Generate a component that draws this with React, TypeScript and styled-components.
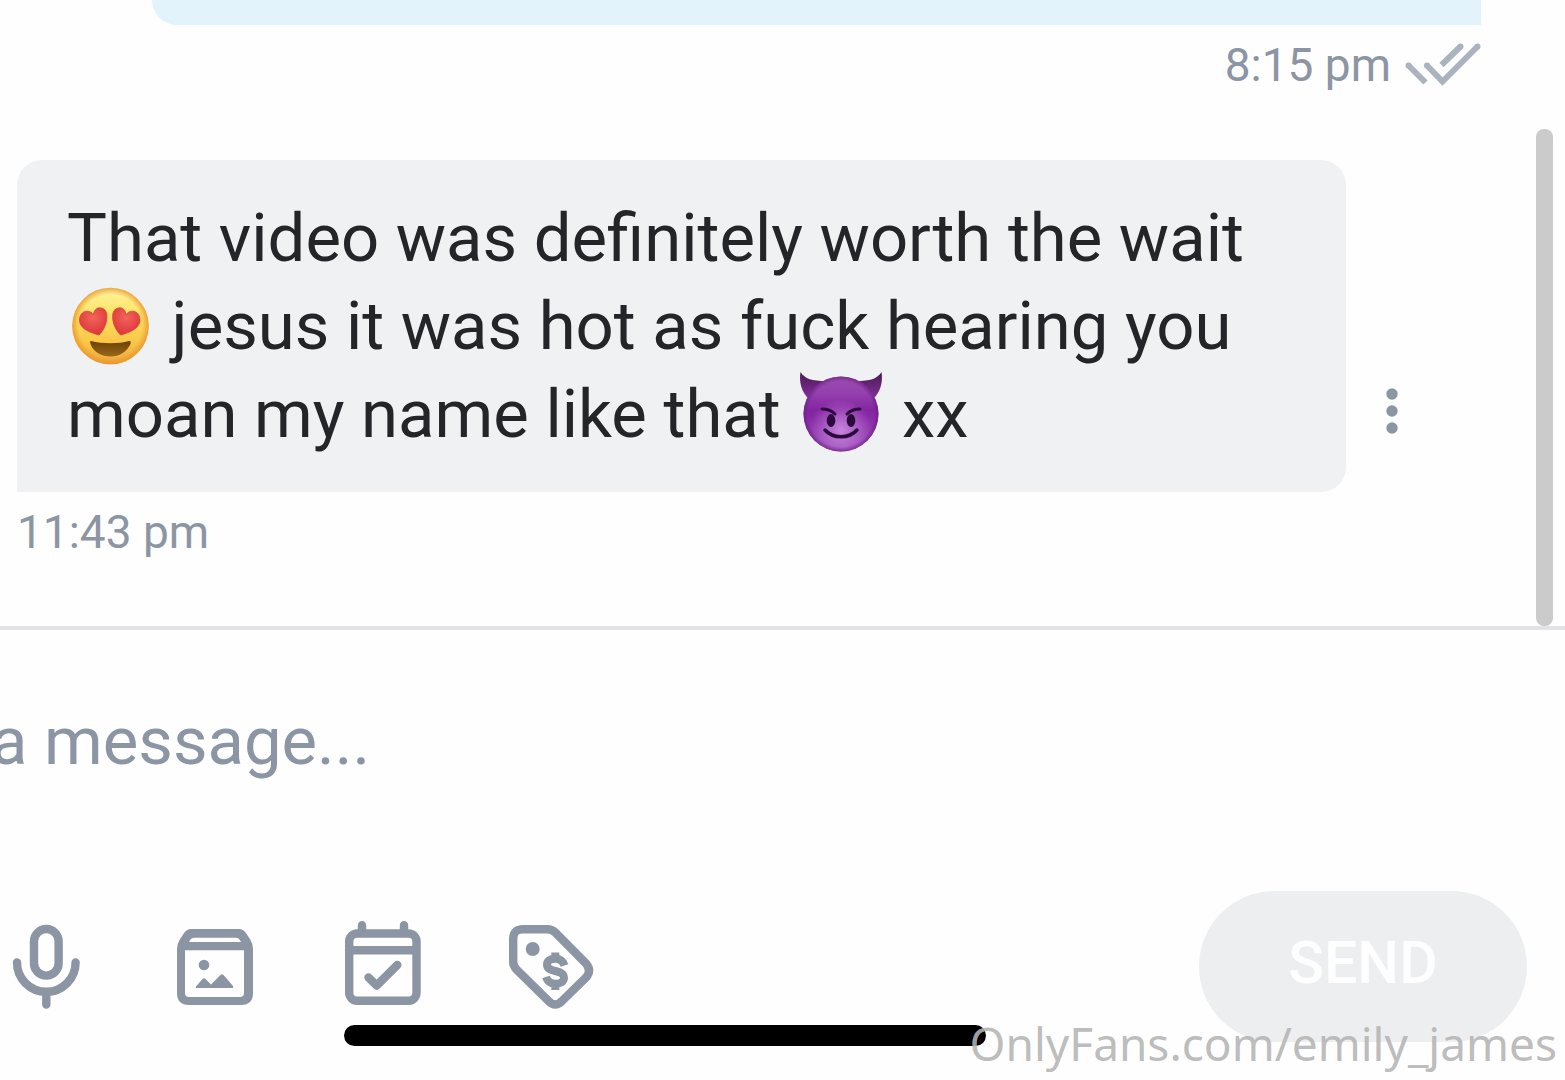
import React from 'react';
import styled, { createGlobalStyle } from 'styled-components';

const slate = '#8c95a4';

const GlobalStyle = createGlobalStyle`
  *, *::before, *::after { box-sizing: border-box; }
  body {
    margin: 0;
    background: #fefefe;
    color: #242529;
    font-family: Roboto, "Noto Sans", sans-serif;
    overflow: hidden;
  }
  button, input { font: inherit; }
`;

const Screen = styled.main`
  position: relative;
  display: flex;
  flex-direction: column;
  min-height: 100vh;
  overflow: hidden;
`;

const Pane = styled.section`
  display: flex;
  border-bottom: 4px solid #e1e3e9;
`;

const Thread = styled.div`
  flex: 1;
  display: flex;
  flex-direction: column;
  gap: 55px;
  padding: 0 55px 54px 17px;
`;

const Gutter = styled.div`
  display: flex;
  flex-direction: column;
  justify-content: flex-end;
  width: 29px;
  padding-right: 12px;
`;

const Thumb = styled.div`
  height: 497px;
  border-radius: 8px;
  background: #cbcbcb;
`;

const Message = styled.article`
  display: flex;
  flex-direction: column;
`;

const SentBubble = styled.div`
  height: 25px;
  margin-left: 135px;
  border-radius: 0 0 0 25px;
  background: #e2f3fc;
`;

const BubbleRow = styled.div`
  display: flex;
  align-items: flex-end;
  padding-right: 43px;
`;

const Bubble = styled.p`
  flex: 1;
  margin: 0;
  padding: 34px 50px;
  border-radius: 25px 25px 25px 0;
  background: #f0f1f3;
  font-size: 67px;
  line-height: 88px;
`;

const Meta = styled.div<{ $end?: boolean }>`
  display: flex;
  align-items: center;
  justify-content: ${(p) => (p.$end ? 'flex-end' : 'flex-start')};
  gap: 14px;
  color: ${slate};
  font-size: 46px;
  line-height: 80px;
`;

const PlainButton = styled.button`
  display: flex;
  align-items: center;
  justify-content: center;
  padding: 0;
  border: 0;
  background: none;
  color: ${slate};
  cursor: pointer;
`;

const MoreButton = styled(PlainButton)`
  width: 92px;
  height: 162px;
`;

const Composer = styled.form`
  flex: 1;
  display: flex;
  flex-direction: column;
  gap: 106px;
  padding: 67px 38px 38px 0;
`;

const MessageInput = styled.input`
  height: 88px;
  margin-left: -9px;
  padding: 0;
  border: 0;
  outline: 0;
  background: none;
  font-size: 67px;
  line-height: 88px;
  &::placeholder { color: ${slate}; opacity: 1; }
`;

const Toolbar = styled.div`
  display: flex;
  align-items: center;
  gap: 68px;
  margin-left: -4px;
`;

const SendButton = styled.button`
  width: 328px;
  height: 151px;
  margin-left: auto;
  padding: 0 0 8px;
  border: 0;
  border-radius: 76px;
  background: #edeef0;
  color: #fefefe;
  font-size: 59px;
  font-weight: 500;
`;

const HomeIndicator = styled.div`
  position: absolute;
  left: 22%;
  right: 37%;
  bottom: 34px;
  height: 21px;
  border-radius: 11px;
  background: #000;
`;

const Watermark = styled.div`
  position: absolute;
  right: 8px;
  bottom: 5px;
  color: rgba(180, 180, 180, 0.9);
  font-family: "Noto Sans", "Open Sans", sans-serif;
  font-size: 46px;
  line-height: 64px;
`;

const EmojiSvg = styled.svg`
  width: 84px;
  height: 84px;
  margin: 0 2px;
  vertical-align: -19px;
`;

function HeartEyes() {
  return (
    <EmojiSvg viewBox="0 0 84 84" role="img" aria-label="heart eyes">
      <defs>
        <linearGradient id="face" x1="0" y1="0" x2="0" y2="1">
          <stop offset="0" stopColor="#fff6a0" />
          <stop offset="0.35" stopColor="#fde264" />
          <stop offset="0.7" stopColor="#f9c748" />
          <stop offset="1" stopColor="#f0a93c" />
        </linearGradient>
        <radialGradient id="faceRim">
          <stop offset="0.82" stopColor="#e8932c" stopOpacity="0" />
          <stop offset="1" stopColor="#e8922c" stopOpacity="0.8" />
        </radialGradient>
        <radialGradient id="heart" cx="0.5" cy="0.35" r="0.65">
          <stop offset="0" stopColor="#f2645c" />
          <stop offset="1" stopColor="#de3538" />
        </radialGradient>
        <linearGradient id="mouth" x1="0" y1="0" x2="0" y2="1">
          <stop offset="0" stopColor="#6b4205" />
          <stop offset="1" stopColor="#98681a" />
        </linearGradient>
      </defs>
      <circle cx="41.500" cy="42" r="38.300" fill="url(#face)" />
      <circle cx="41.500" cy="42" r="38.300" fill="url(#faceRim)" />
      <path
        d="M30 51C22 49 11 45 10.500 37C10 30 15 26 20 27.500C22.500 28 24 29.500 24.500 31C24.500 26.500 28 23 32 24C38 25 38.500 31 37.500 37C36.500 43 33 48 30 51Z"
        fill="url(#heart)" stroke="#d84635" strokeWidth="0.8"
      />
      <path
        d="M51.500 51C59.500 49 70 45 71 37C71.500 30 66.500 26 61.500 27.500C59 28 57.500 29.500 57 31C57 26.500 53.500 23 49.500 24C43.500 25 43 31 44 37C45 43 48.500 48 51.500 51Z"
        fill="url(#heart)" stroke="#d84635" strokeWidth="0.8"
      />
      <path d="M22 57C33 60 50 60 60 57C62 57 62 58 61.500 60C58 68 50 72.500 41.500 72.500C33 72.500 24 68 21.500 60C21 58 21 57 22 57Z" fill="url(#mouth)" />
    </EmojiSvg>
  );
}

function Devil() {
  return (
    <EmojiSvg viewBox="0 0 84 84" role="img" aria-label="smiling face with horns">
      <defs>
        <linearGradient id="horn" x1="0" y1="0" x2="0" y2="1">
          <stop offset="0" stopColor="#4a1a55" />
          <stop offset="1" stopColor="#84319a" />
        </linearGradient>
        <linearGradient id="purple" x1="0" y1="0" x2="0" y2="1">
          <stop offset="0" stopColor="#9a4bae" />
          <stop offset="0.22" stopColor="#9440ae" />
          <stop offset="0.45" stopColor="#8424a2" />
          <stop offset="1" stopColor="#9a4bb8" />
        </linearGradient>
        <radialGradient id="purpleGlow" cx="0.5" cy="0.72" r="0.42">
          <stop offset="0" stopColor="#c684dc" />
          <stop offset="1" stopColor="#c684dc" stopOpacity="0" />
        </radialGradient>
        <radialGradient id="purpleRim">
          <stop offset="0.87" stopColor="#6f218a" stopOpacity="0" />
          <stop offset="1" stopColor="#65207e" stopOpacity="0.7" />
        </radialGradient>
      </defs>
      <path d="M1.500 0C6 7 13 9 27 9L10 27C2 20 0 9 1.500 0Z" fill="url(#horn)" />
      <path d="M82.500 0C78 7 71 9 57 9L74 27C82 20 84 9 82.500 0Z" fill="url(#horn)" />
      <circle cx="42" cy="42" r="37.500" fill="url(#purple)" />
      <circle cx="42" cy="42" r="37.500" fill="url(#purpleGlow)" />
      <circle cx="42" cy="42" r="37.500" fill="url(#purpleRim)" />
      <g fill="none" stroke="#2b0a3c" strokeWidth="3" strokeLinecap="round">
        <path d="M23 37C28 37 33 39 36 42" />
        <path d="M61 37C56 37 51 39 48 42" />
        <path d="M26 58C34 67 50 67 58 58" strokeWidth="3.500" />
      </g>
      <ellipse cx="32" cy="48.500" rx="4.300" ry="6.500" fill="#2b0a3c" />
      <ellipse cx="52" cy="48.500" rx="4.300" ry="6.500" fill="#2b0a3c" />
    </EmojiSvg>
  );
}

function ReadTicks() {
  return (
    <svg width="76" height="48" viewBox="0 0 76 48" fill="none" stroke="#aab3be" strokeWidth="6" aria-label="Read" role="img">
      <path d="M3 24L20.500 41.500M36.500 24L55.500 5.500" />
      <path d="M21.500 24L37.500 40.500L73 5" />
      <g fill="#aab3be" stroke="none">
        <circle cx="3.500" cy="24.500" r="3" />
        <circle cx="22" cy="24.500" r="3" />
        <circle cx="55.500" cy="5.500" r="3" />
        <circle cx="72.500" cy="5.500" r="3" />
      </g>
    </svg>
  );
}

function Glyph({ children }: { children: React.ReactNode }) {
  return (
    <svg
      width="100" height="100" viewBox="0 0 100 100" fill="none"
      stroke="currentColor" strokeWidth="8.400" strokeLinecap="round" strokeLinejoin="round" aria-hidden="true"
    >
      {children}
    </svg>
  );
}

const tools = [
  {
    label: 'Record voice',
    art: (
      <>
        <rect x="38" y="12" width="24.600" height="46.600" rx="12.300" />
        <path d="M21 45.500A29.300 29.300 0 0 0 79.600 45.500M50.300 75V87.500" />
      </>
    ),
  },
  {
    label: 'Open vault',
    art: (
      <g fill="currentColor" stroke="none">
        <path
          fillRule="evenodd"
          d="M27 12H75Q79 12 82 16L86.500 23Q89 27 89 32V76Q89 88 77 88H25Q13 88 13 76V32Q13 27 15.500 23L20 16Q23 12 27 12ZM25 25H77L75.500 22.500Q74.500 20.700 72 20.700H30Q27.500 20.700 26.500 22.500ZM21 33.300V76Q21 80 25 80H76Q80 80 80 76V33.300Z"
        />
        <circle cx="40" cy="48" r="5.300" />
        <path d="M32 69.500L38.500 62Q40 60.300 41.500 62L47 67.500L56.500 58Q58 56.500 59.500 58L69 69Q70 71 68 71H33Q31 71 32 69.500Z" />
      </g>
    ),
  },
  {
    label: 'Schedule message',
    art: (
      <>
        <rect x="17.200" y="16.500" width="67.300" height="67.300" rx="8" />
        <path d="M17 33.200H84M30 8.200V14M72 8.200V14M36.500 60.500L44.700 68.500L65.300 48" />
      </>
    ),
  },
  {
    label: 'Set price',
    art: (
      <>
        <path d="M13.200 22Q13.200 12.200 23 12.200H47.500Q52 12.200 55.300 15.500L86 46.500Q92 53.500 86 60.500L62 84Q55.300 91 48.500 84L16.500 52.500Q13.200 49 13.200 45Z" />
        <circle cx="32.700" cy="32" r="7" fill="currentColor" stroke="none" />
        <path
          strokeWidth="8" strokeLinecap="butt"
          d="M64.500 48.500C63 43.500 59.500 41.700 55.300 41.700C50 41.700 47 44 47 47.500C47 52 51 53 55.300 54C60 55 64 56.500 64 60.800C64 65 60 66.800 55.300 66.800C50 66.800 47.500 64.500 46 60M55.300 35.500V41M55.300 67V73"
        />
      </>
    ),
  },
];

export default function App() {
  return (
    <>
      <GlobalStyle />
      <Screen>
        <Pane>
          <Thread>
            <Message>
              <SentBubble />
              <Meta $end>
                <time>8:15 pm</time>
                <ReadTicks />
              </Meta>
            </Message>
            <Message>
              <BubbleRow>
                <Bubble>
                  That video was definitely worth the wait <HeartEyes /> jesus it was hot as fuck hearing you moan my
                  name like that <Devil /> xx
                </Bubble>
                <MoreButton type="button" aria-label="More options">
                  <svg width="12" height="46" viewBox="0 0 12 46" fill="currentColor" aria-hidden="true">
                    <circle cx="6" cy="6" r="5.700" />
                    <circle cx="6" cy="23" r="5.700" />
                    <circle cx="6" cy="40" r="5.700" />
                  </svg>
                </MoreButton>
              </BubbleRow>
              <Meta>
                <time>11:43 pm</time>
              </Meta>
            </Message>
          </Thread>
          <Gutter>
            <Thumb />
          </Gutter>
        </Pane>
        <Composer onSubmit={(e) => e.preventDefault()}>
          <MessageInput type="text" aria-label="Message" placeholder="a message..." />
          <Toolbar>
            {tools.map((tool) => (
              <PlainButton key={tool.label} type="button" aria-label={tool.label}>
                <Glyph>{tool.art}</Glyph>
              </PlainButton>
            ))}
            <SendButton type="submit" disabled>SEND</SendButton>
          </Toolbar>
        </Composer>
        <HomeIndicator />
        <Watermark>OnlyFans.com/emily_james</Watermark>
      </Screen>
    </>
  );
}
